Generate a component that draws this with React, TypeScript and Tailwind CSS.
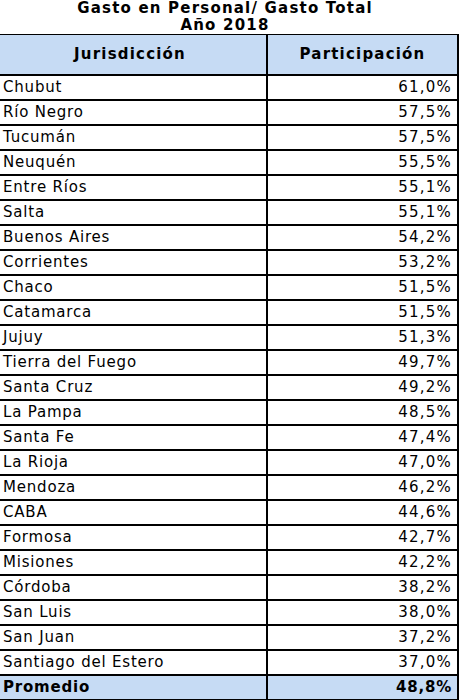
import React from 'react';

const rows: [string, string][] = [
  ['Chubut', '61,0%'],
  ['Río Negro', '57,5%'],
  ['Tucumán', '57,5%'],
  ['Neuquén', '55,5%'],
  ['Entre Ríos', '55,1%'],
  ['Salta', '55,1%'],
  ['Buenos Aires', '54,2%'],
  ['Corrientes', '53,2%'],
  ['Chaco', '51,5%'],
  ['Catamarca', '51,5%'],
  ['Jujuy', '51,3%'],
  ['Tierra del Fuego', '49,7%'],
  ['Santa Cruz', '49,2%'],
  ['La Pampa', '48,5%'],
  ['Santa Fe', '47,4%'],
  ['La Rioja', '47,0%'],
  ['Mendoza', '46,2%'],
  ['CABA', '44,6%'],
  ['Formosa', '42,7%'],
  ['Misiones', '42,2%'],
  ['Córdoba', '38,2%'],
  ['San Luis', '38,0%'],
  ['San Juan', '37,2%'],
  ['Santiago del Estero', '37,0%'],
];

const App: React.FC = () => {
  return (
    <div className="w-[460px] h-[700px] overflow-hidden bg-white text-black font-['DejaVu_Sans',Verdana,sans-serif]">
      <div className="w-[450px] text-center text-[15px] font-bold leading-[17px] tracking-[1.2px]">
        <div>Gasto en Personal/ Gasto Total</div>
        <div>Año 2018</div>
      </div>

      <div className="w-[459px] border-t border-r-2 border-black">
        <div className="flex h-[41px] border-b-2 border-black bg-[#c6dbf4] text-[15px] font-bold tracking-[1.2px]">
          <div className="flex w-[268px] items-center justify-center border-r-2 border-black pr-[6px]">
            Jurisdicción
          </div>
          <div className="flex flex-1 items-center justify-center">Participación</div>
        </div>

        {rows.map(([name, value]) => (
          <div key={name} className="flex h-[25px] border-b-2 border-black text-[15px] tracking-[0.8px]">
            <div className="flex w-[268px] items-center border-r-2 border-black pl-[3px]">{name}</div>
            <div className="flex flex-1 items-center justify-end pr-[5px] tracking-[1.2px]">{value}</div>
          </div>
        ))}

        <div className="flex h-[25px] border-b-2 border-black bg-[#c6dbf4] text-[15px] font-bold tracking-[0.8px]">
          <div className="flex w-[268px] items-center border-r-2 border-black pl-[3px]">Promedio</div>
          <div className="flex flex-1 items-center justify-end pr-[5px]">48,8%</div>
        </div>
      </div>
    </div>
  );
};

export default App;
